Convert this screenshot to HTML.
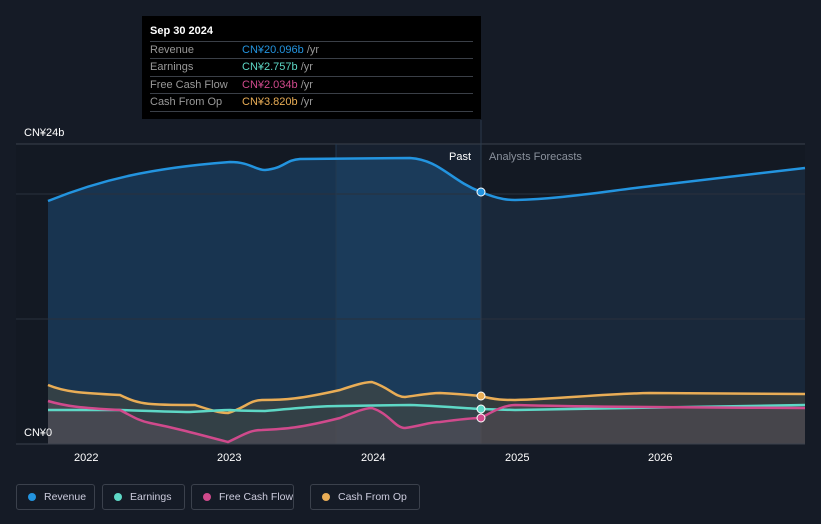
<!DOCTYPE html>
<html><head><meta charset="utf-8"><style>
html,body{margin:0;width:821px;height:524px;background:#151b26;font-family:"Liberation Sans",sans-serif;overflow:hidden;position:relative}
.tip{position:absolute;left:142px;top:16px;width:339px;height:103px;background:#000;color:#fff;font-size:11px}
.tip .r{position:absolute;left:8px;right:8px;border-top:1px solid #3a3f47;height:17px;line-height:17px;color:#999}
.tip .r span{position:absolute;left:92px}
.leg{position:absolute;top:484px;height:26px;border:1px solid #3b414c;border-radius:3px;color:#ccd;font-size:10.5px;line-height:24px;box-sizing:border-box;padding-left:27px;white-space:nowrap}
.leg i{position:absolute;left:11px;top:8px;width:8px;height:8px;border-radius:50%}
</style></head><body>
<svg width="821" height="524" style="position:absolute;left:0;top:0">
<defs>
<clipPath id="past"><rect x="48" y="120" width="433" height="330"/></clipPath>
<clipPath id="hl"><rect x="336" y="120" width="145" height="330"/></clipPath>
<clipPath id="fut"><rect x="481" y="120" width="330" height="330"/></clipPath>
<path id="ra" d="M48,201 C100,180 150,168 230,162 C250,162 255,170 265,170 C285,168 285,160 300,159 L410,158 C440,160 450,180 481,192 C500,200 510,200 515,200 C560,199 600,192 660,185 L805,168 L805,444 L48,444 Z"/>
</defs>
<rect x="16" y="144" width="789" height="300" fill="#131923"/>
<rect x="336" y="144" width="145" height="300" fill="#172130"/>
<use href="#ra" clip-path="url(#past)" fill="#183450"/>
<use href="#ra" clip-path="url(#hl)" fill="#1b3b5a"/>
<use href="#ra" clip-path="url(#fut)" fill="#19283a"/>
<line x1="16" y1="144" x2="805" y2="144" stroke="#3a414c"/>
<line x1="16" y1="194" x2="805" y2="194" stroke="#2a313c"/>
<line x1="16" y1="319" x2="805" y2="319" stroke="#2a313c"/>
<line x1="481" y1="120" x2="481" y2="444" stroke="#2b3a4c"/>
<line x1="336" y1="144" x2="336" y2="444" stroke="#22384f"/>
<path d="M48,385 C65,392 80,393 120,395 C140,405 150,405 195,405 C210,410 220,413 228,413 C245,408 250,400 262,400 C285,400 300,399 340,390 C355,385 365,382 372,382 C390,388 395,397 405,397 C420,395 430,393 440,393 C460,394 470,395 481,396 C495,400 505,400 515,400 C560,399 600,394 650,393 L805,394 L805,444 L48,444 Z" fill="#4a4a3e" opacity="0.55"/>
<path d="M48,401 C65,406 80,408 120,410 C135,418 140,421 150,423 C175,428 190,432 228,442 C245,434 250,430 262,430 C285,429 300,428 340,418 C355,412 365,408 372,408 C390,414 395,428 405,428 C420,426 430,422 440,422 C455,420 470,418 481,418 C495,410 505,405 515,405 C560,406 580,407 805,408 L805,444 L48,444 Z" fill="#6a5a66" opacity="0.35"/>
<path d="M48,201 C100,180 150,168 230,162 C250,162 255,170 265,170 C285,168 285,160 300,159 L410,158 C440,160 450,180 481,192 C500,200 510,200 515,200 C560,199 600,192 660,185 L805,168" fill="none" stroke="#2394df" stroke-width="2.5"/>
<path d="M48,385 C65,392 80,393 120,395 C140,405 150,405 195,405 C210,410 220,413 228,413 C245,408 250,400 262,400 C285,400 300,399 340,390 C355,385 365,382 372,382 C390,388 395,397 405,397 C420,395 430,393 440,393 C460,394 470,395 481,396 C495,400 505,400 515,400 C560,399 600,394 650,393 L805,394" fill="none" stroke="#e9ad56" stroke-width="2.5"/>
<path d="M48,410 L120,410 C150,411 170,412 190,412 C210,411 220,410 230,410 C245,411 255,411 265,411 C300,408 320,406 340,406 L410,405 C440,406 460,408 481,409 L515,410 L805,405" fill="none" stroke="#5ed8c6" stroke-width="2.5"/>
<path d="M48,401 C65,406 80,408 120,410 C135,418 140,421 150,423 C175,428 190,432 228,442 C245,434 250,430 262,430 C285,429 300,428 340,418 C355,412 365,408 372,408 C390,414 395,428 405,428 C420,426 430,422 440,422 C455,420 470,418 481,418 C495,410 505,405 515,405 C560,406 580,407 805,408" fill="none" stroke="#d04a8c" stroke-width="2.5"/>
<line x1="16" y1="444" x2="805" y2="444" stroke="#3a414c"/>
<circle cx="481" cy="192" r="4" fill="#2394df" stroke="#fff" stroke-width="1"/>
<circle cx="481" cy="396" r="4" fill="#e9ad56" stroke="#fff" stroke-width="1"/>
<circle cx="481" cy="409" r="4" fill="#5ed8c6" stroke="#fff" stroke-width="1"/>
<circle cx="481" cy="418" r="4" fill="#d04a8c" stroke="#fff" stroke-width="1"/>
<g font-family="Liberation Sans" font-size="11" fill="#fff">
<text x="24" y="136">CN¥24b</text><text x="24" y="436">CN¥0</text>
<text x="449" y="160">Past</text><text x="489" y="160" fill="#8a919c">Analysts Forecasts</text>
<text x="74" y="461">2022</text><text x="217" y="461">2023</text><text x="361" y="461">2024</text><text x="505" y="461">2025</text><text x="648" y="461">2026</text>
</g></svg>
<div class="tip"><div style="position:absolute;left:8px;top:9px;font-weight:bold">Sep 30 2024</div>
<div class="r" style="top:25px">Revenue<span style="color:#2394df">CN¥20.096b <b style="font-weight:normal;color:#999">/yr</b></span></div>
<div class="r" style="top:42px">Earnings<span style="color:#5ed8c6">CN¥2.757b <b style="font-weight:normal;color:#999">/yr</b></span></div>
<div class="r" style="top:60px">Free Cash Flow<span style="color:#d04a8c">CN¥2.034b <b style="font-weight:normal;color:#999">/yr</b></span></div>
<div class="r" style="top:77px">Cash From Op<span style="color:#e9ad56">CN¥3.820b <b style="font-weight:normal;color:#999">/yr</b></span></div>
<div class="r" style="top:95px;height:0"></div></div>
<div class="leg" style="left:16px;width:79px"><i style="background:#2394df"></i>Revenue</div>
<div class="leg" style="left:102px;width:83px"><i style="background:#5ed8c6"></i>Earnings</div>
<div class="leg" style="left:191px;width:103px"><i style="background:#d04a8c"></i>Free Cash Flow</div>
<div class="leg" style="left:310px;width:110px"><i style="background:#e9ad56"></i>Cash From Op</div>
</body></html>
